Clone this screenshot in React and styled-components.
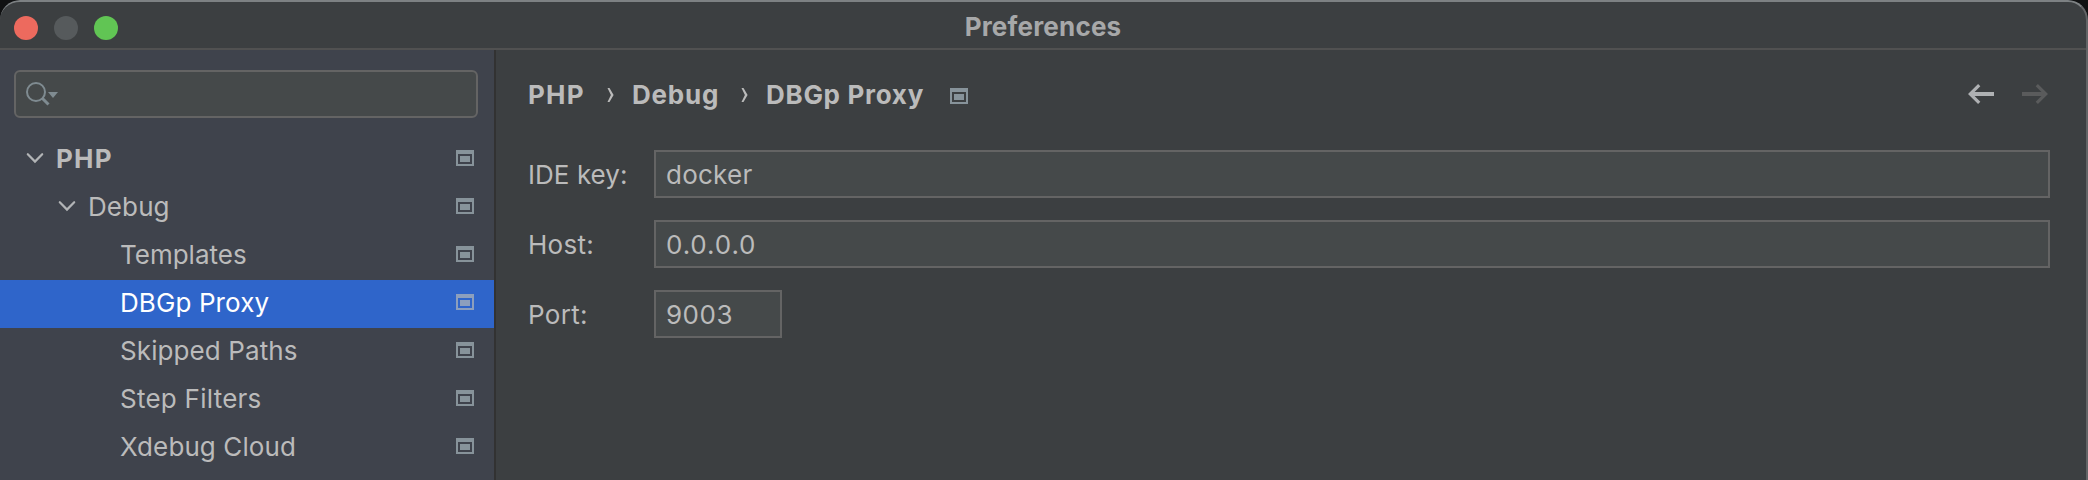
import React from 'react';
import styled, { createGlobalStyle } from 'styled-components';

const GlobalStyle = createGlobalStyle`
  * { box-sizing: border-box; }
  html, body { margin: 0; padding: 0; background: #101112; }
`;

const Window = styled.div`
  position: relative;
  display: flex;
  flex-direction: column;
  width: 2088px;
  height: 480px;
  overflow: hidden;
  border-radius: 20px 20px 0 0;
  background: #3c3f41;
  color: #bbbbbb;
  font-family: Inter, "Liberation Sans", sans-serif;
  font-size: 26px;
  line-height: 48px;
  white-space: pre;

  &::after {
    content: '';
    position: absolute;
    inset: 0;
    border-radius: 20px 20px 0 0;
    border-top: 2px solid #7d8183;
    border-right: 2px solid #626466;
    pointer-events: none;
  }
`;

const TitleBar = styled.header`
  display: grid;
  grid-template-columns: 1fr auto 1fr;
  align-items: center;
  flex: none;
  height: 50px;
  padding: 4px 16px 0 14px;
  border-bottom: 2px solid #515151;
`;

const TrafficLights = styled.div`
  display: flex;
  gap: 16px;
  padding-top: 3px;
`;

const Light = styled.span`
  width: 24px;
  height: 24px;
  border-radius: 50%;
  background: ${(p) => p.$color};
`;

const Title = styled.h1`
  margin: 0;
  padding-top: 1px;
  font-size: 26px;
  line-height: 44px;
  font-weight: 700;
  color: #a7a8a9;
  letter-spacing: ${(p) => p.$track}px;
`;

const Body = styled.div`
  display: flex;
  flex: 1;
  min-height: 0;
`;

const Sidebar = styled.aside`
  flex: none;
  width: 496px;
  padding-top: 20px;
  border-right: 2px solid #323232;
  background: #3f434c;
`;

const Search = styled.div`
  display: flex;
  align-items: center;
  width: 464px;
  height: 48px;
  margin: 0 0 18px 14px;
  padding-left: 10px;
  border: 2px solid #646464;
  border-radius: 6px;
  background: #45494a;
`;

const Row = styled.div`
  display: flex;
  align-items: center;
  height: 48px;
  padding: 0 20px 0 ${(p) => p.$indent}px;
  background: ${(p) => (p.$selected ? '#2f65ca' : 'transparent')};
  color: ${(p) => (p.$selected ? '#ffffff' : 'inherit')};

  > svg { margin-bottom: 4px; }
`;

const Label = styled.span`
  flex: 1;
  font-weight: ${(p) => (p.$bold ? 700 : 400)};
  letter-spacing: ${(p) => p.$track || 0}px;
  padding-left: ${(p) => p.$gap || 0}px;
  line-height: 46px;
  height: 48px;
`;

const Main = styled.main`
  flex: 1;
  padding: 20px 38px 0 32px;
`;

const Header = styled.div`
  display: flex;
  align-items: center;
  justify-content: space-between;
  height: 48px;
`;

const Crumbs = styled.nav`
  display: flex;
  align-items: center;
  padding-top: 2px;

  > svg:last-child { margin-top: 2px; }
`;

const Crumb = styled.span`
  width: ${(p) => p.$width}px;
  font-weight: 700;
  letter-spacing: ${(p) => p.$track}px;
`;

const CrumbChevron = styled.svg`
  margin-right: ${(p) => p.$after}px;
`;

const Arrows = styled.div`
  display: flex;
  gap: 28px;
  padding-right: 2px;
`;

const Form = styled.div`
  display: flex;
  flex-direction: column;
  gap: 22px;
  margin-top: 32px;
`;

const Field = styled.label`
  display: grid;
  grid-template-columns: 126px ${(p) => (p.$short ? '128px' : '1fr')};
  grid-template-rows: 48px;
`;

const FieldName = styled.span`
  line-height: 50px;
  letter-spacing: ${(p) => p.$track}px;
`;

const Input = styled.span`
  padding-left: 10px;
  border: 2px solid #646464;
  background: #45494a;
  line-height: 46px;
  letter-spacing: ${(p) => p.$track}px;
`;

const ProjectIcon = ({ color = '#87939a' }) => (
  <svg width="18" height="16" viewBox="0 0 18 16" shapeRendering="crispEdges">
    <path fill={color} fillRule="evenodd" d="M0 0H18V16H0ZM2 4V14H16V4Z" />
    <rect x="4" y="6" width="10" height="6" fill={color} />
  </svg>
);

const Expander = () => (
  <svg width="18" height="12" viewBox="0 0 18 12">
    <path d="M1.8 2.2 9 9.6 16.2 2.2" fill="none" stroke="#b2b4b6" strokeWidth="2.2" strokeLinecap="round" />
  </svg>
);

const SearchIcon = () => (
  <svg width="34" height="28" viewBox="0 0 34 28">
    <circle cx="10" cy="12" r="9" fill="none" stroke="#7f8b91" strokeWidth="2" />
    <path d="M16 18 22.5 24.5" stroke="#7f8b91" strokeWidth="3" />
    <path d="M22 12H32L27 18Z" fill="#7f8b91" />
  </svg>
);

const Separator = ({ after }) => (
  <CrumbChevron $after={after} width="8" height="16" viewBox="0 0 8 16">
    <path d="M0.5 1H2.5L6.6 8 2.5 15H0.5L3.9 8Z" fill="#bbbbbb" />
  </CrumbChevron>
);

const Arrow = ({ color, forward }) => (
  <svg width="26" height="20" viewBox="0 0 26 20">
    <g transform={forward ? 'matrix(-1 0 0 1 26 0)' : undefined} fill="none" stroke={color}>
      <path d="M3 10H26" strokeWidth="4" />
      <path d="M11.2 1.2 2.2 10 11.2 18.8" strokeWidth="3.2" />
    </g>
  </svg>
);

const tree = [
  { name: 'PHP', indent: 26, bold: true, open: true, gap: 12, track: 1.2 },
  { name: 'Debug', indent: 58, open: true, gap: 12, track: 0.1 },
  { name: 'Templates', indent: 120, track: 0 },
  { name: 'DBGp Proxy', indent: 120, selected: true, track: 0.1 },
  { name: 'Skipped Paths', indent: 120, track: 0.1 },
  { name: 'Step Filters', indent: 120, track: 0.25 },
  { name: 'Xdebug Cloud', indent: 120, track: 0.1 },
];

const fields = [
  { name: 'IDE key:', value: 'docker', track: 0.05, valueTrack: 0.25 },
  { name: 'Host:', value: '0.0.0.0', track: 0.3, valueTrack: 0.9 },
  { name: 'Port:', value: '9003', short: true, track: 0.3, valueTrack: 0.5 },
];

export default function App() {
  return (
    <>
      <GlobalStyle />
      <Window>
        <TitleBar>
          <TrafficLights>
            <Light $color="#ed6a5e" />
            <Light $color="#565a5c" />
            <Light $color="#61c554" />
          </TrafficLights>
          <Title $track={0.2}>Preferences</Title>
        </TitleBar>
        <Body>
          <Sidebar>
            <Search><SearchIcon /></Search>
            {tree.map((item) => (
              <Row key={item.name} $indent={item.indent} $selected={item.selected}>
                {item.open && <Expander />}
                <Label $bold={item.bold} $gap={item.gap} $track={item.track}>{item.name}</Label>
                <ProjectIcon color={item.selected ? '#8c9fbd' : undefined} />
              </Row>
            ))}
          </Sidebar>
          <Main>
            <Header>
              <Crumbs>
                <Crumb $width={79} $track={1.2}>PHP</Crumb>
                <Separator after={17} />
                <Crumb $width={109} $track={0.8}>Debug</Crumb>
                <Separator after={17} />
                <Crumb $width={184} $track={0.7}>DBGp Proxy</Crumb>
                <ProjectIcon />
              </Crumbs>
              <Arrows>
                <Arrow color="#afb1b3" />
                <Arrow color="#5a5b5c" forward />
              </Arrows>
            </Header>
            <Form>
              {fields.map((f) => (
                <Field key={f.name} $short={f.short}>
                  <FieldName $track={f.track}>{f.name}</FieldName>
                  <Input $track={f.valueTrack}>{f.value}</Input>
                </Field>
              ))}
            </Form>
          </Main>
        </Body>
      </Window>
    </>
  );
}
